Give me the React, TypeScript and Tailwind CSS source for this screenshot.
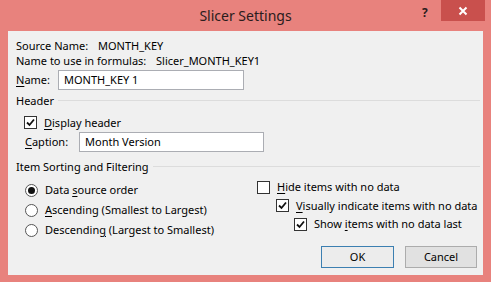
import React from "react";

const font = { fontFamily: '"Noto Sans", "Open Sans", sans-serif' };

function Check({ checked }: { checked?: boolean }) {
    return (
        <span className="flex size-[13px] shrink-0 items-center justify-center border border-[#333] bg-white">
            {checked && (
                <svg width="9" height="9" viewBox="0 0 9 9">
                    <path d="M1 4.5 L3.5 7 L8 1.5" fill="none" stroke="#111" strokeWidth="1.8" />
                </svg>
            )}
        </span>
    );
}

function Radio({ on }: { on?: boolean }) {
    return (
        <span className="flex size-[13px] shrink-0 items-center justify-center rounded-full border border-[#555] bg-white">
            {on && <span className="size-[7px] rounded-full bg-[#111]" />}
        </span>
    );
}

function U({ children }: { children: React.ReactNode }) {
    return <span className="underline underline-offset-2">{children}</span>;
}

function Group({ label }: { label: string }) {
    return (
        <div className="flex items-center gap-[4px] pr-[3px] leading-[15px]">
            <span>{label}</span>
            <span className="h-0 flex-1 border-t border-[#dcdcdc]" />
        </div>
    );
}

const radios = [
    { on: true, text: <>Data <U>s</U>ource order</> },
    { on: false, text: <><U>A</U>scending (Smallest to Largest)</> },
    { on: false, text: <>Descendin<U>g</U> (Largest to Smallest)</> },
];

const checks = [
    { indent: "pl-0", checked: false, text: <><U>H</U>ide items with no data</> },
    { indent: "pl-[19px]", checked: true, text: <><U>V</U>isually indicate items with no data</> },
    { indent: "pl-[37px]", checked: true, text: <>Show <U>i</U>tems with no data last</> },
];

export default function App() {
    return (
        <div style={font} className="flex h-[282px] w-[491px] flex-col whitespace-nowrap bg-[#e8827d] text-[11px] text-black">
            <div className="relative flex h-[31px] shrink-0 items-center justify-center">
                <span className="pb-[1px] text-[14px] text-[#2a1c1c]">Slicer Settings</span>
                <span className="absolute left-[422px] top-[4px] text-[12px] font-bold text-[#2a1c1c]">?</span>
                <span className="absolute left-[441px] top-0 flex h-[21px] w-[44px] items-center justify-center bg-[#c9504d]">
                    <svg width="10" height="10" viewBox="0 0 10 10">
                        <path d="M1.5 1.5 L8.5 8.5 M8.5 1.5 L1.5 8.5" stroke="#fff" strokeWidth="2" />
                    </svg>
                </span>
            </div>

            <div className="mx-[8px] flex h-[244px] flex-col bg-[#f0f0f0] pl-[8px] pt-[7px]">
                <div className="flex leading-[15px]">
                    <span className="w-[82px]">Source Name:</span>
                    <span>MONTH_KEY</span>
                </div>
                <div className="flex leading-[15px]">
                    <span className="w-[140px]">Name to use in formulas:</span>
                    <span>Slicer_MONTH_KEY1</span>
                </div>
                <div className="mt-[2px] flex items-center">
                    <span className="w-[42px]"><U>N</U>ame:</span>
                    <span className="flex h-[20px] w-[186px] items-center border border-[#abadb3] bg-white px-[5px]">MONTH_KEY 1</span>
                </div>

                <div className="mt-[3px]">
                    <Group label="Header" />
                </div>
                <div className="mt-[7px] flex items-center gap-[7px] pl-[8px] leading-[15px]">
                    <Check checked />
                    <span><U>D</U>isplay header</span>
                </div>
                <div className="mt-[2px] flex items-center pl-[9px]">
                    <span className="w-[54px]"><U>C</U>aption:</span>
                    <span className="flex h-[20px] w-[185px] items-center border border-[#abadb3] bg-white px-[5px]">Month Version</span>
                </div>

                <div className="mt-[7px]">
                    <Group label="Item Sorting and Filtering" />
                </div>

                <div className="flex">
                    <div className="mt-[6px] flex w-[241px] flex-col pl-[9px]">
                        {radios.map((r, i) => (
                            <div key={i} className="flex h-[20px] items-center gap-[7px]">
                                <Radio on={r.on} />
                                <span>{r.text}</span>
                            </div>
                        ))}
                    </div>
                    <div className="mt-[4px] flex flex-col">
                        {checks.map((c, i) => (
                            <div key={i} className={`flex h-[18.5px] items-center gap-[7px] ${c.indent}`}>
                                <Check checked={c.checked} />
                                <span>{c.text}</span>
                            </div>
                        ))}
                    </div>
                </div>

                <div className="mt-[6px] flex justify-end gap-[11px] pr-[6px]">
                    <button className="flex h-[22px] w-[73px] items-center justify-center border border-[#3c7fb1] bg-[#ececec]">OK</button>
                    <button className="flex h-[22px] w-[72px] items-center justify-center border border-[#acacac] bg-[#e1e1e1]">Cancel</button>
                </div>
            </div>
        </div>
    );
}
